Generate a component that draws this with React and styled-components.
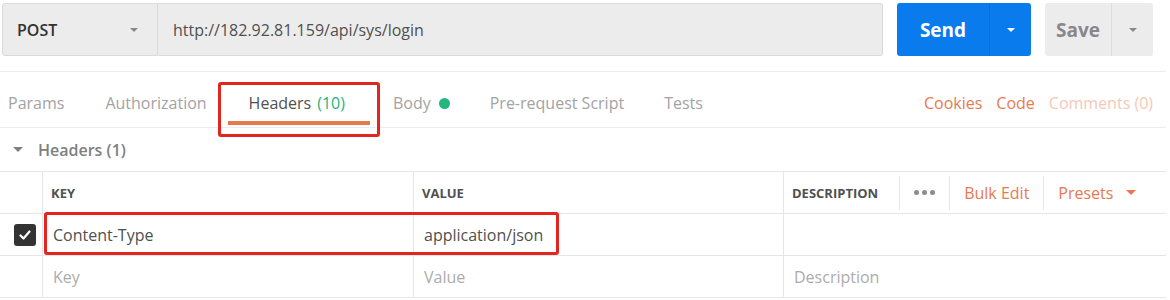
import React from "react"
import styled, { createGlobalStyle } from "styled-components"

const GlobalStyle = createGlobalStyle`
  body {
    margin: 0;
    background: #ffffff;
    font-family: "Open Sans", "Noto Sans", sans-serif;
  }
`

const Page = styled.div`
  position: relative;
  width: 1166px;
  height: 300px;
  overflow: hidden;
`

const TopBar = styled.div`
  display: flex;
  padding: 3px 0 0 2px;
  height: 53px;
`

const MethodSelect = styled.div`
  box-sizing: border-box;
  width: 156px;
  display: flex;
  align-items: center;
  justify-content: space-between;
  padding: 0 19px 0 14px;
  background: #ececec;
  border: 1px solid #dadada;
  border-radius: 3px 0 0 3px;
  color: #333;
  font-size: 16px;
  font-weight: 600;
`

const UrlInput = styled.div`
  box-sizing: border-box;
  width: 725px;
  display: flex;
  align-items: center;
  padding-left: 15px;
  background: #ececec;
  border: 1px solid #dadada;
  border-left: none;
  border-radius: 0 3px 3px 0;
  color: #505050;
  font-size: 16px;
`

const SplitButton = styled.div`
  display: flex;
  width: ${p => p.width}px;
  margin-left: 14px;
  border-radius: 3px;
  background: ${p => (p.primary ? "#097bed" : "#ececec")};
  color: ${p => (p.primary ? "#ffffff" : "#888888")};
  overflow: hidden;
`

const ButtonMain = styled.div`
  flex: 1;
  display: flex;
  align-items: center;
  justify-content: center;
  font-size: 19px;
  font-weight: 700;
`

const ButtonArrow = styled.div`
  width: ${p => p.width}px;
  display: flex;
  align-items: center;
  justify-content: center;
  border-left: 1px solid ${p => (p.primary ? "#0a6cd0" : "#dddddd")};
`

const Caret = styled.span`
  width: 0;
  height: 0;
  border-left: ${p => p.size}px solid transparent;
  border-right: ${p => p.size}px solid transparent;
  border-top: ${p => p.size}px solid ${p => p.color};
`

const Rule = styled.div`
  margin-top: 15px;
  height: 1px;
  background: #ececec;
`

const TabBar = styled.div`
  display: flex;
  align-items: flex-end;
  height: 53px;
  padding-bottom: 2px;
  border-bottom: 1px solid #ececec;
`

const Tab = styled.div`
  box-sizing: border-box;
  height: 40px;
  display: flex;
  align-items: center;
  gap: 6px;
  padding: 0 ${p => p.pr}px 0 ${p => p.pl}px;
  border-bottom: 4px solid ${p => (p.active ? "#e8794f" : "transparent")};
  color: ${p => (p.active ? "#505050" : "#a3a3a3")};
  font-size: 16px;
  white-space: nowrap;
`

const Count = styled.span`
  color: #26b47f;
`

const Dot = styled.span`
  width: 11px;
  height: 11px;
  margin-left: 2px;
  border-radius: 50%;
  background: #26b47f;
`

const TabLinks = styled.div`
  margin-left: auto;
  height: 40px;
  box-sizing: border-box;
  border-bottom: 4px solid transparent;
  display: flex;
  align-items: center;
  gap: 14px;
  padding-right: 13px;
  font-size: 16px;
`

const TabLink = styled.span`
  color: ${p => (p.muted ? "#f5c9b6" : "#e8794f")};
`

const SectionTitle = styled.div`
  height: 43px;
  display: flex;
  align-items: center;
  gap: 15px;
  padding-left: 13px;
  color: #808080;
  font-size: 16px;
  font-weight: 600;
`

const Table = styled.div`
  display: grid;
  grid-template-columns: 42px 371px 370px 383px;
  grid-auto-rows: 42px;
  border-bottom: 1px solid #e6e6e6;
`

const Cell = styled.div`
  box-sizing: border-box;
  display: flex;
  align-items: center;
  border-top: 1px solid #e6e6e6;
  border-left: ${p => (p.first ? "none" : "1px solid #e6e6e6")};
  padding-left: ${p => (p.first ? 14 : p.head ? 8 : 10)}px;
  font-size: ${p => (p.head ? "13px" : "16px")};
  font-weight: ${p => (p.head ? 700 : 400)};
  color: ${p => (p.placeholder ? "#acacac" : "#505050")};
`

const HeadActions = styled.div`
  display: flex;
  align-items: center;
  height: 100%;
  margin-left: 21px;
  font-size: 16px;
  font-weight: 400;
  color: #e8794f;
`

const ActionItem = styled.div`
  height: 34px;
  display: flex;
  align-items: center;
  gap: 13px;
  padding: 0 14px;
  border-left: 1px solid #e6e6e6;
`

const Dots = styled.span`
  display: flex;
  gap: 3px;
  & > i {
    width: 5px;
    height: 5px;
    border-radius: 50%;
    background: #8c8c8c;
  }
`

const Checkbox = styled.span`
  width: 22px;
  height: 22px;
  border-radius: 3px;
  background: #333333;
  display: flex;
  align-items: center;
  justify-content: center;
`

const Highlight = styled.div`
  position: absolute;
  left: ${p => p.x}px;
  top: ${p => p.y}px;
  width: ${p => p.w}px;
  height: ${p => p.h}px;
  box-sizing: border-box;
  border: 3px solid #e3251e;
  border-radius: 3px;
  pointer-events: none;
`

const tabs = [
  { label: "Params", pl: 8, pr: 20 },
  { label: "Authorization", pl: 21, pr: 21 },
  { label: "Headers", count: "(10)", active: true, pl: 21, pr: 25 },
  { label: "Body", dot: true, pl: 23, pr: 20 },
  { label: "Pre-request Script", pl: 20, pr: 20 },
  { label: "Tests", pl: 20, pr: 20 },
]

export default function App() {
  return (
    <>
      <GlobalStyle />
      <Page>
        <TopBar>
          <MethodSelect>
            POST
            <Caret size={4} color="#888" />
          </MethodSelect>
          <UrlInput>http://182.92.81.159/api/sys/login</UrlInput>
          <SplitButton primary width={134}>
            <ButtonMain>Send</ButtonMain>
            <ButtonArrow primary width={41}>
              <Caret size={4} color="#fff" />
            </ButtonArrow>
          </SplitButton>
          <SplitButton width={108}>
            <ButtonMain>Save</ButtonMain>
            <ButtonArrow width={41}>
              <Caret size={4} color="#888" />
            </ButtonArrow>
          </SplitButton>
        </TopBar>
        <Rule />
        <TabBar>
          {tabs.map(t => (
            <Tab key={t.label} active={t.active} pl={t.pl} pr={t.pr}>
              {t.label}
              {t.count && <Count>{t.count}</Count>}
              {t.dot && <Dot />}
            </Tab>
          ))}
          <TabLinks>
            <TabLink>Cookies</TabLink>
            <TabLink>Code</TabLink>
            <TabLink muted>Comments (0)</TabLink>
          </TabLinks>
        </TabBar>
        <SectionTitle>
          <Caret size={5} color="#808080" />
          Headers (1)
        </SectionTitle>
        <Table>
          <Cell first head />
          <Cell head>KEY</Cell>
          <Cell head>VALUE</Cell>
          <Cell head>
            DESCRIPTION
            <HeadActions>
              <ActionItem>
                <Dots>
                  <i />
                  <i />
                  <i />
                </Dots>
              </ActionItem>
              <ActionItem>Bulk Edit</ActionItem>
              <ActionItem>
                Presets
                <Caret size={5} color="#e8794f" />
              </ActionItem>
            </HeadActions>
          </Cell>

          <Cell first>
            <Checkbox>
              <svg width="14" height="14" viewBox="0 0 14 14">
                <path d="M2.5 7.5 L5.5 10.5 L11.5 3.5" fill="none" stroke="#fff" strokeWidth="2.2" strokeLinecap="round" strokeLinejoin="round" />
              </svg>
            </Checkbox>
          </Cell>
          <Cell>Content-Type</Cell>
          <Cell>application/json</Cell>
          <Cell />

          <Cell first />
          <Cell placeholder>Key</Cell>
          <Cell placeholder>Value</Cell>
          <Cell placeholder>Description</Cell>
        </Table>
        <Highlight x={218} y={82} w={162} h={55} />
        <Highlight x={44} y={212} w={515} h={43} />
      </Page>
    </>
  )
}
